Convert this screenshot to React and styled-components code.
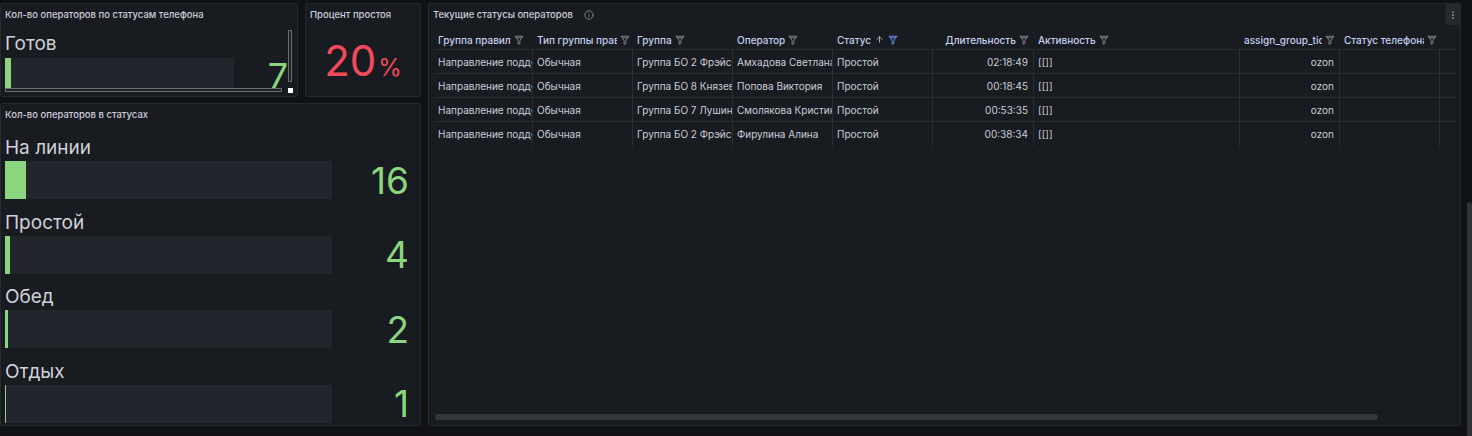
import React from 'react';
import styled, { createGlobalStyle } from 'styled-components';
import { Info, EllipsisVertical, ArrowUp } from 'lucide-react';

const GlobalStyle = createGlobalStyle`
  html, body { margin: 0; padding: 0; background: #111217; }
  body {
    font-family: Inter, "Noto Sans", "Liberation Sans", sans-serif;
    color: #ccccdc;
    overflow: hidden;
  }
  * { box-sizing: border-box; }
`;

const GREEN = '#8bd57f';
const RED = '#f2495c';
const COLS = '99px 100px 100px 100px 100px 101px 206px 100px 100px 16px';

const Page = styled.div`
  display: flex;
  width: 1472px;
  height: 436px;
`;

const Dashboard = styled.div`
  display: grid;
  grid-template-columns: 298px 116px 1033px;
  grid-template-rows: 94px 323px;
  column-gap: 7px;
  row-gap: 6px;
  padding-top: 3px;
`;

const PageScroll = styled.div`
  flex: 1;
  display: flex;
  justify-content: flex-end;
  padding-top: 202px;
`;

const PageThumb = styled.div`
  width: 5px;
  background: #303237;
  border-radius: 3px 3px 0 0;
`;

const Panel = styled.section`
  grid-column: ${(p) => p.$col};
  grid-row: ${(p) => p.$row};
  background: #181b1f;
  border: 1px solid #26292e;
  border-radius: 2px;
  display: flex;
  flex-direction: column;
  min-width: 0;
  overflow: hidden;
`;

const PanelHeader = styled.header`
  display: flex;
  align-items: center;
  height: 22px;
  flex: none;
  padding-left: 4px;
  font-size: 9.5px;
  font-weight: 500;
  line-height: 22px;
  white-space: nowrap;
  color: #ccccdc;
`;

const HeaderInfo = styled.span`
  display: inline-flex;
  margin-left: 11px;
  color: #8e8e9a;
`;

const MenuButton = styled.button`
  margin-left: auto;
  align-self: flex-start;
  width: 15px;
  height: 21px;
  padding: 0;
  border: none;
  border-radius: 2px;
  background: #25282d;
  color: #8e8e9a;
  display: flex;
  align-items: center;
  justify-content: center;
`;

/* ---------- panel 1: phone statuses with scrollbars ---------- */

const ScrollFrame = styled.div`
  display: grid;
  grid-template-columns: 283px 5px;
  grid-template-rows: 62px 5px;
  padding-left: 4px;
`;

const ScrollContent = styled.div`
  overflow: hidden;
  padding-top: 6px;
`;

const VTrack = styled.div`
  padding-top: 4px;
`;

const VThumb = styled.div`
  width: 4px;
  height: 52px;
  background: #1f2125;
  border: 1px solid #6a6c71;
`;

const HThumb = styled.div`
  width: 277px;
  height: 4px;
  background: #1f2125;
  border: 1px solid #6a6c71;
`;

const Corner = styled.div`
  width: 5px;
  height: 5px;
  background: #ffffff;
`;

/* ---------- bar gauges ---------- */

const GaugeList = styled.div`
  display: flex;
  flex-direction: column;
  gap: 12.5px;
  padding: 11px 11px 0 4px;
`;

const Gauge = styled.div`
  display: flex;
  flex-direction: column;
  gap: ${(p) => p.$gap}px;
`;

const GaugeLabel = styled.div`
  font-size: 19px;
  line-height: ${(p) => p.$lh}px;
  color: #d0d1dc;
  white-space: nowrap;
`;

const GaugeRow = styled.div`
  display: grid;
  grid-template-columns: ${(p) => p.$bar}px 1fr;
  height: ${(p) => p.$h}px;
  align-items: center;
`;

const BarTrack = styled.div`
  height: 100%;
  background: #22252b;
  display: flex;
`;

const BarFill = styled.div`
  height: 100%;
  background: ${GREEN};
`;

const GaugeValue = styled.div`
  font-size: ${(p) => p.$size}px;
  line-height: 1;
  color: ${GREEN};
  text-align: right;
  padding-right: ${(p) => p.$pr}px;
`;

/* ---------- panel 2: stat ---------- */

const StatBody = styled.div`
  flex: 1;
  display: flex;
  align-items: center;
  justify-content: center;
  padding-bottom: 1px;
`;

const StatValue = styled.div`
  color: ${RED};
  font-size: 42px;
  line-height: 1;
  white-space: nowrap;
`;

const StatUnit = styled.span`
  font-size: 24px;
  margin-left: 2px;
`;

/* ---------- table panel ---------- */

const TableBody = styled.div`
  flex: 1;
  display: flex;
  flex-direction: column;
  padding: 4px 4px 5px 5px;
  min-height: 0;
`;

const Table = styled.div`
  flex: 1;
  font-size: 10px;
`;

const Row = styled.div`
  display: grid;
  grid-template-columns: ${COLS};
  height: ${(p) => (p.$head ? 20 : 24)}px;
  border-bottom: ${(p) => (p.$last ? 'none' : '1px solid #2a2d33')};
`;

const HeadCell = styled.div`
  display: flex;
  align-items: center;
  justify-content: ${(p) => (p.$right ? 'flex-end' : 'flex-start')};
  gap: 3px;
  padding: 0 ${(p) => (p.$right ? 5 : 3)}px 0 4px;
  min-width: 0;
  font-weight: 500;
  color: #c3cff0;
  white-space: nowrap;
`;

const HeadText = styled.span`
  overflow: hidden;
  min-width: 0;
`;

const HeadIcons = styled.span`
  display: inline-flex;
  align-items: center;
  flex: none;
  color: ${(p) => (p.$active ? '#6e9fff' : '#8e8e9a')};
`;

const SortIcon = styled.span`
  display: inline-flex;
  margin: 0 1px 0 1px;
  color: #c3c5cf;
`;

const Cell = styled.div`
  display: flex;
  align-items: center;
  justify-content: ${(p) => (p.$right ? 'flex-end' : 'flex-start')};
  padding: 0 ${(p) => (p.$right ? 5 : 3)}px 0 4px;
  overflow: hidden;
  white-space: nowrap;
  min-width: 0;
  border-right: ${(p) => (p.$end ? 'none' : '1px solid #2a2d33')};
  color: #ccccdc;
`;

const HScroll = styled.div`
  flex: none;
  padding-left: 1px;
`;

const HScrollThumb = styled.div`
  width: 943px;
  height: 6px;
  border-radius: 3px;
  background: #34363b;
`;

const Funnel = () => (
  <svg width="10" height="10" viewBox="0 0 16 16" fill="none" stroke="currentColor" strokeWidth="1.4" strokeLinejoin="round">
    <path d="M1.5 2h13l-5 6.2v5.3l-3 1.2V8.2z" />
    <path d="M3.6 4.5h8.8" />
  </svg>
);

const columns = [
  { title: 'Группа правил' },
  { title: 'Тип группы правил' },
  { title: 'Группа' },
  { title: 'Оператор' },
  { title: 'Статус', sorted: true, active: true },
  { title: 'Длительность', right: true },
  { title: 'Активность' },
  { title: 'assign_group_ticket', right: true },
  { title: 'Статус телефона' },
  { title: '', empty: true },
];

const rows = [
  ['Направление поддержки', 'Обычная', 'Группа БО 2 Фрэйс Наталья', 'Амхадова Светлана', 'Простой', '02:18:49', '[[]]', 'ozon', '', ''],
  ['Направление поддержки', 'Обычная', 'Группа БО 8 Князева Ольга', 'Попова Виктория', 'Простой', '00:18:45', '[[]]', 'ozon', '', ''],
  ['Направление поддержки', 'Обычная', 'Группа БО 7 Лушина Анна', 'Смолякова Кристина', 'Простой', '00:53:35', '[[]]', 'ozon', '', ''],
  ['Направление поддержки', 'Обычная', 'Группа БО 2 Фрэйс Наталья', 'Фирулина Алина', 'Простой', '00:38:34', '[[]]', 'ozon', '', ''],
];

const statusGauges = [
  { label: 'На линии', value: 16 },
  { label: 'Простой', value: 4 },
  { label: 'Обед', value: 2 },
  { label: 'Отдых', value: 1 },
];

const MAX = 250;

export default function App() {
  return (
    <>
      <GlobalStyle />
      <Page>
        <Dashboard>
          <Panel $col="1" $row="1">
            <PanelHeader>Кол-во операторов по статусам телефона</PanelHeader>
            <ScrollFrame>
              <ScrollContent>
                <Gauge $gap={3}>
                  <GaugeLabel $lh={23}>Готов</GaugeLabel>
                  <GaugeRow $bar={229} $h={36}>
                    <BarTrack>
                      <BarFill style={{ width: `${(7 / MAX) * 229}px` }} />
                    </BarTrack>
                    <GaugeValue $size={36} $pr={0}>7</GaugeValue>
                  </GaugeRow>
                </Gauge>
              </ScrollContent>
              <VTrack>
                <VThumb />
              </VTrack>
              <HThumb />
              <Corner />
            </ScrollFrame>
          </Panel>

          <Panel $col="2" $row="1">
            <PanelHeader>Процент простоя</PanelHeader>
            <StatBody>
              <StatValue>
                20<StatUnit>%</StatUnit>
              </StatValue>
            </StatBody>
          </Panel>

          <Panel $col="1 / 3" $row="2">
            <PanelHeader>Кол-во операторов в статусах</PanelHeader>
            <GaugeList>
              {statusGauges.map((g) => (
                <Gauge key={g.label} $gap={2}>
                  <GaugeLabel $lh={22}>{g.label}</GaugeLabel>
                  <GaugeRow $bar={327} $h={38}>
                    <BarTrack>
                      <BarFill style={{ width: `${Math.max((g.value / MAX) * 327, 1.3)}px` }} />
                    </BarTrack>
                    <GaugeValue $size={37} $pr={0}>{g.value}</GaugeValue>
                  </GaugeRow>
                </Gauge>
              ))}
            </GaugeList>
          </Panel>

          <Panel $col="3" $row="1 / 3">
            <PanelHeader>
              Текущие статусы операторов
              <HeaderInfo>
                <Info size={10} strokeWidth={2} />
              </HeaderInfo>
              <MenuButton>
                <EllipsisVertical size={10} strokeWidth={2.5} />
              </MenuButton>
            </PanelHeader>
            <TableBody>
              <Table>
                <Row $head>
                  {columns.map((c, i) =>
                    c.empty ? (
                      <HeadCell key={i} />
                    ) : (
                      <HeadCell key={i} $right={c.right}>
                        <HeadText>{c.title}</HeadText>
                        {c.sorted && (
                          <SortIcon>
                            <ArrowUp size={9} strokeWidth={2.2} />
                          </SortIcon>
                        )}
                        <HeadIcons $active={c.active}>
                          <Funnel />
                        </HeadIcons>
                      </HeadCell>
                    )
                  )}
                </Row>
                {rows.map((r, ri) => (
                  <Row key={ri} $last={ri === rows.length - 1}>
                    {r.map((v, ci) => (
                      <Cell key={ci} $right={columns[ci].right} $end={ci === r.length - 1}>
                        {v}
                      </Cell>
                    ))}
                  </Row>
                ))}
              </Table>
              <HScroll>
                <HScrollThumb />
              </HScroll>
            </TableBody>
          </Panel>
        </Dashboard>
        <PageScroll>
          <PageThumb />
        </PageScroll>
      </Page>
    </>
  );
}
